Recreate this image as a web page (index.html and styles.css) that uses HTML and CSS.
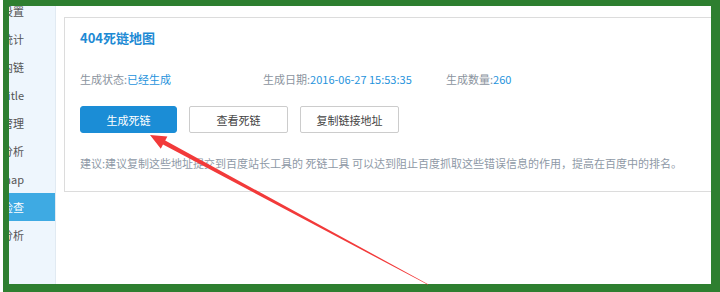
FILE: index.html
```html
<!DOCTYPE html>
<html lang="zh-CN">
<head>
<meta charset="UTF-8">
<meta name="viewport" content="width=device-width, initial-scale=1.0">
<title>死链检查</title>
<link rel="stylesheet" href="styles.css">
</head>
<body>
<div class="frame">
    <aside class="side">
        <ul class="side-menu">
            <li>站点设置</li>
            <li>流量统计</li>
            <li>内链</li>
            <li>Title</li>
            <li>管理</li>
            <li>分析</li>
            <li>Sitemap</li>
            <li class="active">死链检查</li>
            <li>日志分析</li>
        </ul>
    </aside>
    <main class="main">
        <section class="card">
            <h2 class="card-title">404死链地图</h2>
            <div class="info">
                <span class="info-item">生成状态:<em>已经生成</em></span>
                <span class="info-item">生成日期:<em>2016-06-27 15:53:35</em></span>
                <span class="info-item">生成数量:<em>260</em></span>
            </div>
            <div class="actions">
                <button class="btn btn-primary">生成死链</button>
                <button class="btn">查看死链</button>
                <button class="btn">复制链接地址</button>
            </div>
            <p class="tip">建议:建议复制这些地址提交到百度站长工具的 死链工具 可以达到阻止百度抓取这些错误信息的作用，提高在百度中的排名。</p>
        </section>
    </main>
</div>

<!-- 标注箭头 -->
<svg class="arrow" width="720" height="292" viewBox="0 0 720 292">
    <polygon points="150,135 167.4,136.4 165.2,140.6 428.1,284.2 427.9,284.8 163,144.6 160.8,148.8" fill="#f23a3a"/>
</svg>
</body>
</html>
```

FILE: styles.css
```css
body {
    margin: 0;
    height: 292px;
    overflow: hidden;
    position: relative;
    background: #fff;
    font-family: "Noto Sans CJK SC", sans-serif;
}

.frame {
    margin-left: 3px;
    height: 292px;
    box-sizing: border-box;
    border: solid #2e7f30;
    border-width: 6px 9px 8px 6px;
    display: flex;
    overflow: hidden;
}

/* 左侧菜单 */
.side {
    width: 46px;
    flex: none;
    background: #eef6fd;
    border-right: 1px solid #e1eaf2;
    overflow: hidden;
}
.side-menu {
    list-style: none;
    margin: -9px 0 0;
    padding: 0;
}
.side-menu li {
    height: 28px;
    line-height: 28px;
    display: flex;
    justify-content: flex-end;
    padding-right: 31px;
    white-space: nowrap;
    font-size: 11px;
    color: #555;
}
.side-menu li.active {
    background: #3eaae3;
    color: #fff;
}

/* 内容 */
.main {
    flex: 1;
    padding: 11px 0 0 8px;
    overflow: hidden;
}
.card {
    width: 700px;
    border: 1px solid #dcdcdc;
    padding: 10px 15px 18px;
}
.card-title {
    margin: 0;
    font-size: 13px;
    line-height: 20px;
    font-weight: bold;
    color: #1d8ad4;
}
.info {
    margin-top: 21px;
    display: flex;
    font-size: 11px;
    line-height: 20px;
    color: #8b949e;
}
.info-item {
    width: 183px;
}
.info-item em {
    font-style: normal;
    color: #1f93dc;
}
.actions {
    margin-top: 17px;
    display: flex;
    gap: 12px;
}
.btn {
    width: 99px;
    height: 27px;
    padding: 0;
    font-family: inherit;
    font-size: 11px;
    color: #444;
    background: #fff;
    border: 1px solid #ccc;
    border-radius: 2px;
}
.btn-primary {
    width: 97px;
    color: #fff;
    background: #1b8dd6;
    border-color: #1b8dd6;
    border-radius: 3px;
}
.tip {
    margin: 20px 0 0;
    font-size: 11px;
    line-height: 20px;
    color: #8e99a6;
    white-space: nowrap;
}

.arrow {
    position: absolute;
    top: 0;
    left: 0;
    pointer-events: none;
}
```
